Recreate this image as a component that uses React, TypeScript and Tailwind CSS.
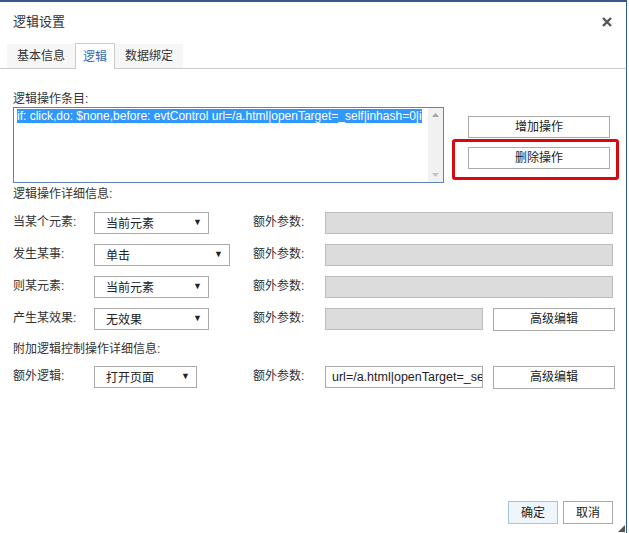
import React from "react";

const font = { fontFamily: '"Liberation Sans", "Noto Sans CJK SC", sans-serif' };

const Select = ({ value, width }: { value: string; width: string }) => (
  <div className={`${width} h-[22px] border border-[#aaa] bg-white flex items-center justify-between pl-[11px] pr-[6px]`}>
    <span className="text-[12px] text-[#222] pt-[2px]">{value}</span>
    <span className="text-[9px] text-[#222]">▼</span>
  </div>
);

const Btn = ({ children, className = "" }: { children: React.ReactNode; className?: string }) => (
  <div className={`border border-[#aaa] bg-white flex items-center justify-center text-[12px] text-[#222] ${className}`}>
    {children}
  </div>
);

const Row = ({
  label,
  value,
  selectWidth,
  children,
}: {
  label: string;
  value: string;
  selectWidth: string;
  children: React.ReactNode;
}) => (
  <div className="flex items-center h-[22px]">
    <span className="w-[81px] text-[12px] text-[#333] -mt-[2px]">{label}</span>
    <div className="w-[159px]">
      <Select value={value} width={selectWidth} />
    </div>
    <span className="w-[72px] text-[12px] text-[#333] -mt-[2px]">额外参数:</span>
    {children}
  </div>
);

export default function App() {
  return (
    <div style={font} className="w-[627px] h-[533px] bg-white border-t-2 border-r border-[#34588a] flex flex-col relative overflow-hidden">
      {/* header */}
      <div className="h-[39px] flex items-center justify-between pl-[13px] pr-[14px]">
        <span className="text-[13px] text-[#333]">逻辑设置</span>
        <svg width="10" height="10" viewBox="0 0 10 10">
          <path d="M1 1 L9 9 M9 1 L1 9" stroke="#555" strokeWidth="2.4" />
        </svg>
      </div>

      {/* tabs */}
      <div className="mt-[2px] h-[26px] flex items-end pl-[7px] border-b border-[#ccc]">
        <div className="h-[24px] w-[68px] bg-[#f6f6f6] flex items-center justify-center text-[12px] text-[#333]">基本信息</div>
        <div className="h-[26px] w-[40px] bg-white border border-b-0 border-[#ccc] -mb-px flex items-center justify-center text-[12px] text-[#3a6aa8]">逻辑</div>
        <div className="h-[24px] w-[68px] bg-[#f6f6f6] flex items-center justify-center text-[12px] text-[#333]">数据绑定</div>
      </div>

      <div className="pl-[13px] pt-[22px]">
        <div className="h-[16px] leading-[16px] text-[12px] text-[#333]">逻辑操作条目:</div>
        <div className="flex">
          <div className="w-[431px] h-[76px] border border-[#5f84ab] flex bg-white">
            <div className="flex-1 overflow-hidden pt-[1px] pl-[3px]">
              <div className="whitespace-nowrap text-[12px] leading-[14px] bg-[#3297fd] text-white w-max">
                if: click,do: $none,before: evtControl url=/a.html|openTarget=_self|inhash=0|i
              </div>
            </div>
            <div className="w-[15px] bg-[#f1f1f1] flex flex-col items-center justify-between py-[5px]">
              <svg width="7" height="4" viewBox="0 0 7 4">
                <path d="M0 4 L3.5 0 L7 4 Z" fill="#a3a3a3" />
              </svg>
              <svg width="7" height="4" viewBox="0 0 7 4">
                <path d="M0 0 L3.5 4 L7 0 Z" fill="#c3c3c3" />
              </svg>
            </div>
          </div>
          <div className="ml-[8px] pt-[9px] flex flex-col">
            <Btn className="ml-[16px] w-[142px] h-[22px]">增加操作</Btn>
            <div className="mt-[1px] w-[167px] h-[41px] border-[3px] border-[#d9080f] rounded-[3px] pl-[13px] pt-[5px]">
              <Btn className="w-[142px] h-[22px]">删除操作</Btn>
            </div>
          </div>
        </div>

        <div className="mt-[3px] h-[16px] leading-[16px] text-[12px] text-[#333]">逻辑操作详细信息:</div>

        <div className="mt-[10px] flex flex-col gap-[10px]">
          <Row label="当某个元素:" value="当前元素" selectWidth="w-[115px]">
            <div className="w-[288px] h-[22px] bg-[#dcdcdc] border border-[#bcbcbc]" />
          </Row>
          <Row label="发生某事:" value="单击" selectWidth="w-[136px]">
            <div className="w-[288px] h-[22px] bg-[#dcdcdc] border border-[#bcbcbc]" />
          </Row>
          <Row label="则某元素:" value="当前元素" selectWidth="w-[115px]">
            <div className="w-[288px] h-[22px] bg-[#dcdcdc] border border-[#bcbcbc]" />
          </Row>
          <Row label="产生某效果:" value="无效果" selectWidth="w-[115px]">
            <div className="w-[158px] h-[22px] bg-[#dcdcdc] border border-[#bcbcbc]" />
            <Btn className="ml-[10px] w-[122px] h-[23px]">高级编辑</Btn>
          </Row>
        </div>

        <div className="mt-[11px] h-[16px] leading-[16px] text-[12px] text-[#333]">附加逻辑控制操作详细信息:</div>

        <div className="mt-[9px]">
          <Row label="额外逻辑:" value="打开页面" selectWidth="w-[103px]">
            <div className="w-[158px] h-[22px] bg-white border border-[#aaa] overflow-hidden whitespace-nowrap pl-[6px] text-[12.5px] leading-[20px] text-[#222]">
              url=/a.html|openTarget=_se
            </div>
            <Btn className="ml-[10px] w-[122px] h-[23px]">高级编辑</Btn>
          </Row>
        </div>
      </div>

      {/* footer */}
      <div className="mt-auto pb-[9px] pr-[13px] flex justify-end gap-[5px]">
        <Btn className="w-[50px] h-[23px] !bg-[#eef5fd] !border-[#9fc3ea]">确定</Btn>
        <Btn className="w-[50px] h-[23px]">取消</Btn>
      </div>

      <svg className="absolute right-[1px] bottom-[1px]" width="7" height="7" viewBox="0 0 7 7">
        <path d="M7 0 L7 7 L0 7 Z" fill="#555" />
      </svg>
    </div>
  );
}
